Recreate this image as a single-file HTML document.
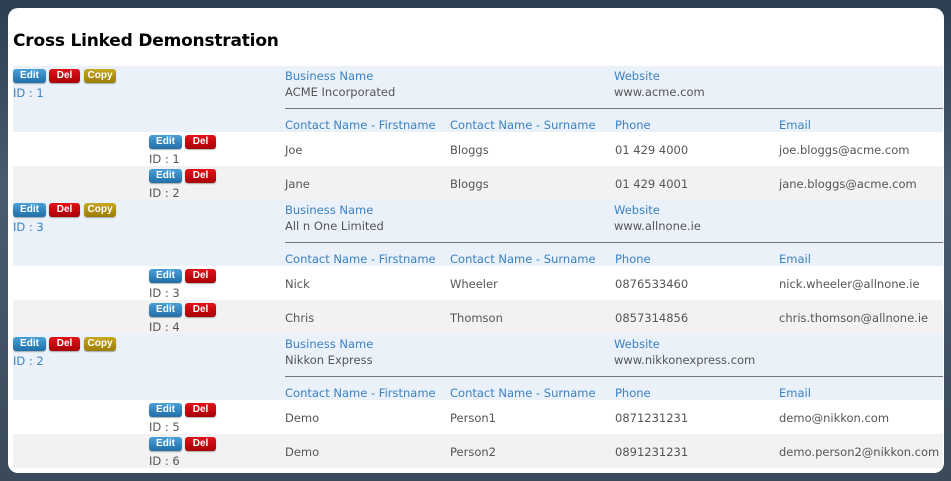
<!DOCTYPE html><html><head><style>
body{margin:0;width:951px;height:481px;background:linear-gradient(180deg,#2c3e50,#4a5c70 40%,#3a4a5a);font-family:"DejaVu Sans",Verdana,sans-serif;font-size:11.5px;color:#555;position:relative;overflow:hidden}
.panel{position:absolute;left:8px;top:8px;width:936px;height:465px;background:#fff;border-radius:10px}
h1{position:absolute;left:13px;top:31px;margin:0;font-size:17px;font-weight:bold;color:#000;font-family:"DejaVu Sans",Verdana,sans-serif;letter-spacing:-0.2px}
.a{position:absolute}
.bh{position:absolute;left:13px;width:930px;height:66px;background:#eaf1f8}
.r{position:absolute;left:13px;width:930px;height:34px}
.hr{position:absolute;left:285px;width:658px;height:1px;background:#777}
.l{color:#3b82c4}
.btn{position:absolute;height:14px;border-radius:3px;color:#fff;font-family:"Liberation Sans",Arial,sans-serif;font-weight:bold;font-size:10px;line-height:14px;text-align:center;box-shadow:0 1px 1px rgba(0,0,0,.3)}
.e{width:33px;background:linear-gradient(#4aa0d8,#1f6fa8)}
.d{width:31px;background:linear-gradient(#e0141a,#a80005)}
.c{width:32px;background:linear-gradient(#c8a820,#9a7c00)}
</style></head><body><div class="panel"></div>
<h1>Cross Linked Demonstration</h1>
<div id="w"></div>
<script>
var B=[["1","ACME Incorporated","www.acme.com",[["1","Joe","Bloggs","01 429 4000","joe.bloggs@acme.com"],["2","Jane","Bloggs","01 429 4001","jane.bloggs@acme.com"]]],
["3","All n One Limited","www.allnone.ie",[["3","Nick","Wheeler","0876533460","nick.wheeler@allnone.ie"],["4","Chris","Thomson","0857314856","chris.thomson@allnone.ie"]]],
["2","Nikkon Express","www.nikkonexpress.com",[["5","Demo","Person1","0871231231","demo@nikkon.com"],["6","Demo","Person2","0891231231","demo.person2@nikkon.com"]]]];
var h="";
B.forEach(function(b,i){var y=66+i*134;
h+='<div class="bh" style="top:'+y+'px"></div>';
h+='<div class="btn e" style="left:13px;top:'+(y+3)+'px">Edit</div><div class="btn d" style="left:49px;top:'+(y+3)+'px">Del</div><div class="btn c" style="left:84px;top:'+(y+3)+'px">Copy</div>';
h+='<div class="a l" style="left:13px;top:'+(y+20)+'px">ID : '+b[0]+'</div>';
h+='<div class="a l" style="left:285px;top:'+(y+3)+'px">Business Name</div><div class="a" style="left:285px;top:'+(y+19)+'px">'+b[1]+'</div>';
h+='<div class="a l" style="left:614px;top:'+(y+3)+'px">Website</div><div class="a" style="left:614px;top:'+(y+19)+'px">'+b[2]+'</div>';
h+='<div class="hr" style="top:'+(y+42)+'px"></div>';
var hy=y+52;
[["285","Contact Name - Firstname"],["450","Contact Name - Surname"],["615","Phone"],["779","Email"]].forEach(function(c){h+='<div class="a l" style="left:'+c[0]+'px;top:'+hy+'px">'+c[1]+'</div>';});
b[3].forEach(function(c,j){var ry=y+66+j*34;
h+='<div class="r" style="top:'+ry+'px;background:'+(j?'#f2f2f2':'#fff')+'"></div>';
h+='<div class="btn e" style="left:149px;top:'+(ry+3)+'px">Edit</div><div class="btn d" style="left:185px;top:'+(ry+3)+'px">Del</div>';
h+='<div class="a" style="left:149px;top:'+(ry+20)+'px">ID : '+c[0]+'</div>';
[285,450,615,779].forEach(function(x,k){h+='<div class="a" style="left:'+x+'px;top:'+(ry+11)+'px">'+c[k+1]+'</div>';});
});});
document.getElementById("w").innerHTML=h;
</script></body></html>
